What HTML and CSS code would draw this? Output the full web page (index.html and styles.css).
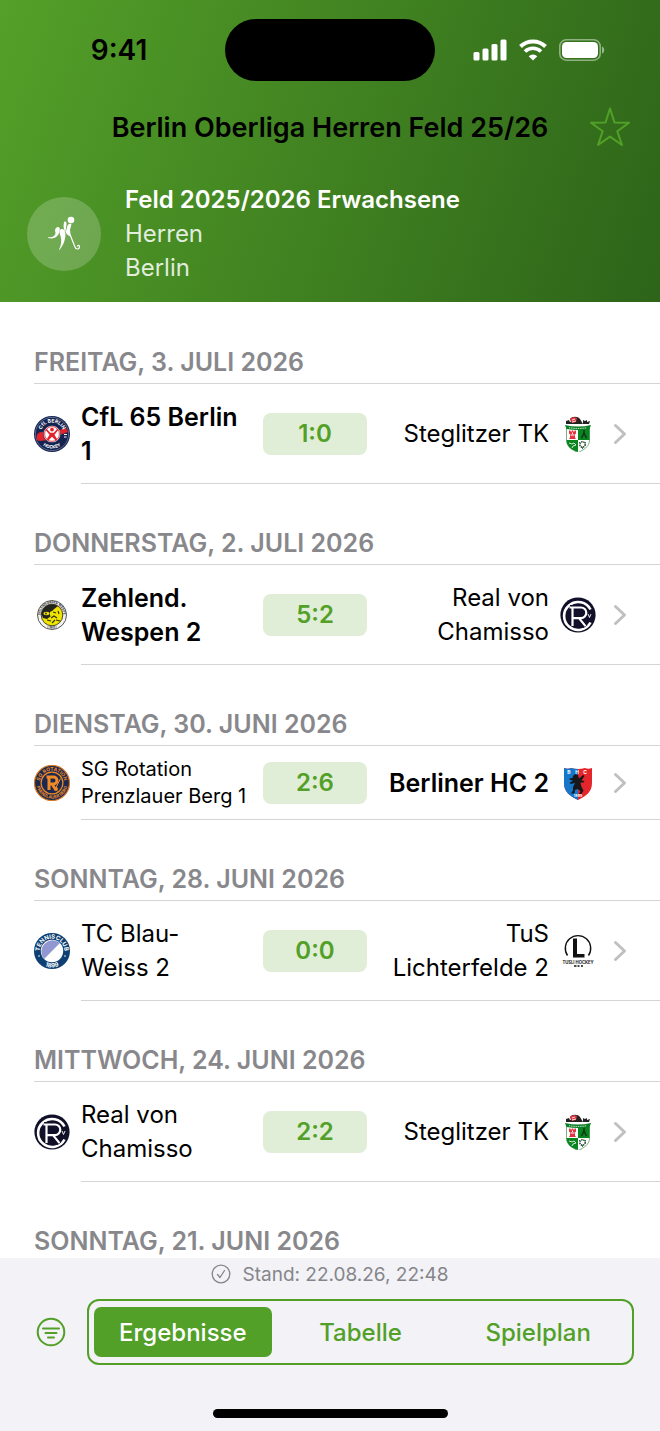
FILE: index.html
```html
<!DOCTYPE html>
<html lang="de">
<head>
  <meta charset="UTF-8" />
  <meta name="viewport" content="width=device-width, initial-scale=1">
  <title>Berlin Oberliga Herren Feld 25/26</title>
  <link rel="stylesheet" href="styles.css">
</head>
<body>

  <!-- shapes used more than once -->
  <svg class="defs" aria-hidden="true">
    <symbol id="crest-steglitz" viewBox="0 0 36 36">
      <path d="M6 5l3-1 1 2 3-1-1 3H6zM23 4l2 1 2-1v2l3-1-1 3h-6z" fill="#222"/>
      <path d="M10 3c2-3 8-3 10 0l3 5H12z" fill="#222"/>
      <path d="M10 3c2-2 5-2 7-1l-1 4-4 1z" fill="#e2343e"/>
      <path d="M12 4l3-1M12 6l4-1" stroke="#fff" stroke-width=".8"/>
      <path d="M6.500 12h23v12c0 7-6 10-11.500 12.500C12.500 34 6.500 31 6.500 24z" fill="#fff" stroke="#2c7a35" stroke-width=".6"/>
      <path d="M18 12h11.500v12H18z" fill="#08851f"/>
      <path d="M6.500 24H18v12C12 34 6.500 31 6.500 24z" fill="#08851f"/>
      <path d="M5 9q13 3 26 0l-1.500 4q-11.500 2-23 0z" fill="#0b7e25"/>
      <path d="M9 11.700q9 1.500 18 0" fill="none" stroke="#fff" stroke-width="1" stroke-dasharray="1 .8"/>
      <path d="M9 14.500h1.500v1h1.300v-1h1.400v1h1.300v-1H16v3l-1 1v3l1 1.500H9l1-1.500v-3l-1-1z" fill="#e2343e"/>
      <path d="M10.500 19h4M12.500 16.500v1.500" stroke="#fff" stroke-width="1"/>
      <path d="M24 14v3M24 17l-2.500 5M24 17l2.500 5" stroke="#14301a" stroke-width="1.500"/>
      <path d="M9 27l3 1 2-1 2 2-3 1-1 2" fill="none" stroke="#e8f4e9" stroke-width=".9"/>
      <circle cx="22.500" cy="28.500" r="2.700" fill="none" stroke="#1e3a23" stroke-width="1.400" stroke-dasharray="1.500 .7"/>
      <path d="M22.500 31v2M19 26l1 1M26 26l-1 1" stroke="#1e6e2c" stroke-width=".9"/>
    </symbol>

    <symbol id="crest-chamisso" viewBox="0 0 36 36">
      <circle cx="18" cy="18" r="17.600" fill="#101129"/>
      <path d="M30.500 12.500A14 14 0 1 0 30.500 25.500" fill="none" stroke="#fff" stroke-width="2.600"/>
      <path d="M10 10.500h11a5.500 5.500 0 0 1 0 11h-7M12.500 10.500V29M19 21.500l6.500 8" fill="none" stroke="#101129" stroke-width="5"/>
      <path d="M9.500 10.500h11.500a5.300 5.300 0 0 1 0 10.600h-8M12.500 10.500v18.500M19 21.100l6.500 8" fill="none" stroke="#fff" stroke-width="2.200"/>
      <path d="M28 17l1.500 3.500L31 17" fill="none" stroke="#fff" stroke-width=".9"/>
    </symbol>

    <symbol id="chevron" viewBox="0 0 14 22">
      <path d="M2.500 2.500L11.500 11l-9 8.500" fill="none" stroke="#c0c0c3" stroke-width="3" stroke-linecap="round" stroke-linejoin="round"/>
    </symbol>
  </svg>

  <div class="app">
    <header class="header">
      <div class="status-bar">
        <span class="time">9:41</span>
        <span class="island"></span>
        <span class="status-icons">
          <svg width="34" height="22" viewBox="0 0 34 22" fill="#fff">
            <rect x="0.500" y="13" width="6" height="8.500" rx="1.500"/>
            <rect x="9.500" y="9.500" width="6" height="12" rx="1.500"/>
            <rect x="18.500" y="5" width="6" height="16.500" rx="1.500"/>
            <rect x="27.500" y="0.500" width="6" height="21" rx="1.500"/>
          </svg>
          <svg width="28" height="22" viewBox="0 0 28 22" fill="none" stroke="#fff">
            <path d="M1.500 7.500a18 18 0 0 1 25 0" stroke-width="4"/>
            <path d="M6 12.500a11.500 11.500 0 0 1 16 0" stroke-width="3.600"/>
            <path d="M14 21.500l-4.300-4.300a6.200 6.200 0 0 1 8.600 0z" fill="#fff" stroke="none"/>
          </svg>
          <svg width="46" height="22" viewBox="0 0 46 22">
            <rect x="0.800" y="0.800" width="40.400" height="20.400" rx="6.500" fill="none" stroke="#fff" stroke-opacity=".45" stroke-width="1.600"/>
            <rect x="3" y="3" width="36" height="16" rx="4.500" fill="#fff"/>
            <path d="M43 7.500c3 1 3 6 0 7z" fill="#fff" fill-opacity=".5"/>
          </svg>
        </span>
      </div>

      <div class="nav-bar">
        <button class="icon-btn" aria-label="Zurück">
          <svg width="40" height="40" viewBox="0 0 40 40"><path d="M3 7L-9 20l12 13" fill="none" stroke="#4f9c27" stroke-width="3" stroke-linecap="round" stroke-linejoin="round" overflow="visible"/></svg>
        </button>
        <h1>Berlin Oberliga Herren Feld 25/26</h1>
        <button class="icon-btn" aria-label="Favorit">
          <svg width="40" height="40" viewBox="0 0 40 40"><path d="M20 1.500l4.500 14 14.500.2-11.700 8.600 4.700 13.700L20 29.600 8 38l4.700-13.700L1 15.700l14.500-.2z" fill="none" stroke="#52a028" stroke-width="2" stroke-linejoin="round"/></svg>
        </button>
      </div>

      <div class="league">
        <div class="league-icon">
          <svg width="34" height="36" viewBox="0 0 34 36" fill="#fff">
            <circle cx="24" cy="4" r="3.300"/>
            <path d="M17.500 5.500c2-.5 2.500 1.500 1.800 4l-.8 6.500c-2-2-2.500-8-1-10.500z"/>
            <path d="M20.500 9.500c1-2 3.800-2.500 3.900-.7l-1.400 5 .7 6.700c-2.500-.5-4.500-2.500-4.900-4.500z"/>
            <path d="M9.500 11.500c2-1.500 3.500 0 3.300 2-.2 6-4.800 10.500-11.800 8.500l.3-.8c4.500.5 7.200-1.700 7.200-4.700-.8-1.500-.5-4 1-5z"/>
            <path d="M13.500 13.500c2-1.500 5 .5 5 4.500 0 6-2.500 12.500-6.800 16.500 2.500-5 3.300-10 1.800-14.500-1-2-1.500-5 0-6.500z"/>
            <path d="M23 18.500l5 12.500c1 3 4.500 2.500 4.500-.5 0-1.500-2-1.500-2.300 0" fill="none" stroke="#fff" stroke-width="1.200"/>
          </svg>
        </div>
        <div class="league-text">
          <strong>Feld 2025/2026 Erwachsene</strong>
          <span>Herren</span>
          <span>Berlin</span>
        </div>
      </div>
    </header>

    <main class="results">
      <section>
        <h2>Freitag, 3. Juli 2026</h2>
        <a class="match" href="#">
          <svg class="crest" viewBox="0 0 36 36">
            <circle cx="18" cy="18" r="18" fill="#14234f"/>
            <circle cx="18" cy="18" r="16.600" fill="none" stroke="#8b96b5" stroke-width=".6"/>
            <path id="cfl-top" d="M6.500 18a11.500 11.500 0 0 1 23 0" fill="none"/>
            <path id="cfl-bottom" d="M3.500 18a14.500 14.500 0 0 0 29 0" fill="none"/>
            <path d="M3 19c1-3 5-4 9-2l13-3 7-2 2 4-8 3-12 5-8 1c-3 0-4-3-3-6z" fill="#e5232d"/>
            <circle cx="18" cy="18" r="8.600" fill="#fff" stroke="#14234f" stroke-width=".6"/>
            <circle cx="18" cy="18" r="7.400" fill="none" stroke="#e5232d" stroke-width=".8"/>
            <circle cx="18" cy="13.600" r="1.900" fill="#e5232d"/>
            <path d="M12.500 12.500l3.700 4.200h3.600l3.700-4.200 1 1.200-4 5 3 5-1.600 1-3.900-4-3.900 4-1.600-1 3-5-4-5z" fill="#e5232d"/>
            <text class="ring" font-size="5" fill="#fff"><textPath href="#cfl-top" startOffset="50%" text-anchor="middle">CfL BERLIN</textPath></text>
            <text class="ring" font-size="4.500" fill="#fff"><textPath href="#cfl-bottom" startOffset="50%" text-anchor="middle">HOCKEY</textPath></text>
            <path d="M30 18.500h3M30 21h2.500" stroke="#fff" stroke-width="1"/>
          </svg>
          <span class="team winner">CfL 65 Berlin 1</span>
          <span class="score">1:0</span>
          <span class="team away">Steglitzer TK</span>
          <svg class="crest"><use href="#crest-steglitz"/></svg>
          <svg class="chevron"><use href="#chevron"/></svg>
        </a>
      </section>

      <section>
        <h2>Donnerstag, 2. Juli 2026</h2>
        <a class="match" href="#">
          <svg class="crest" viewBox="0 0 36 36">
            <circle cx="18" cy="18" r="14.500" fill="#f2f2f2" stroke="#555" stroke-width="1"/>
            <path id="wespen-top" d="M6.500 18a11.500 11.500 0 0 1 23 0" fill="none"/>
            <path id="wespen-bottom" d="M4.300 18a13.700 13.700 0 0 0 27.400 0" fill="none"/>
            <circle cx="18" cy="18" r="10.800" fill="#efe500" stroke="#222" stroke-width=".8"/>
            <path d="M7.300 17A10.800 10.800 0 0 1 24 9l-5 4-2 6-4 3-4-1z" fill="#24241f"/>
            <ellipse cx="12.500" cy="16.500" rx="3" ry="1.700" fill="#efe500"/>
            <path d="M16 15l4-2 4 2 3-1-1 4-4 1-3-1-3 1z" fill="#efe500"/>
            <path d="M19 15l3 1M24 14l1 3M17 21l3-2 3 2M13 23l4 1M22 23l4 1M18 26l3-3" fill="none" stroke="#33320f" stroke-width="1.100"/>
            <circle cx="12" cy="16.500" r=".9" fill="#333"/>
            <text class="ring" font-size="3.200" fill="#222"><textPath href="#wespen-top" startOffset="50%" text-anchor="middle">ZEHLENDORFER WESPEN</textPath></text>
            <text class="ring" font-size="3.200" fill="#222"><textPath href="#wespen-bottom" startOffset="50%" text-anchor="middle">• 1911 •</textPath></text>
          </svg>
          <span class="team winner">Zehlend. Wespen 2</span>
          <span class="score">5:2</span>
          <span class="team away">Real von Chamisso</span>
          <svg class="crest"><use href="#crest-chamisso"/></svg>
          <svg class="chevron"><use href="#chevron"/></svg>
        </a>
      </section>

      <section>
        <h2>Dienstag, 30. Juni 2026</h2>
        <a class="match compact" href="#">
          <svg class="crest" viewBox="0 0 36 36">
            <circle cx="18" cy="18" r="17.500" fill="#1b2950" stroke="#d87920" stroke-width="1.200"/>
            <path id="rot-top" d="M5.800 18a12.200 12.200 0 0 1 24.400 0" fill="none"/>
            <path id="rot-bottom" d="M2.300 18a15.700 15.700 0 0 0 31.400 0" fill="none"/>
            <text class="ring" font-size="5" fill="#f08a24"><textPath href="#rot-top" startOffset="50%" text-anchor="middle">SG ROTATION</textPath></text>
            <text class="ring" font-size="4.400" fill="#f08a24"><textPath href="#rot-bottom" startOffset="50%" text-anchor="middle">PRENZLAUER BERG</textPath></text>
            <circle cx="18" cy="18" r="10.900" fill="#1b2950" stroke="#f08a24" stroke-width="1.200"/>
            <path d="M12.500 12h7a3.500 3.500 0 0 1 0 7h-4M15 12v13M18 19l4 6" fill="none" stroke="#f08a24" stroke-width="3"/>
            <path d="M26.500 13.500l-5 10" stroke="#f08a24" stroke-width="1"/>
            <circle cx="22" cy="24" r="2" fill="#f08a24"/>
          </svg>
          <span class="team long">SG Rotation Prenzlauer Berg 1</span>
          <span class="score">2:6</span>
          <span class="team away winner">Berliner HC 2</span>
          <svg class="crest" viewBox="0 0 36 36">
            <path d="M4 3q4 1.500 7 0 7 2 14 0 3 1.500 7 0v15c0 9-6 13-14 17C10 31 4 27 4 18z" fill="#e4262c"/>
            <path d="M4 3q4 1.500 7 0 3.500 1 7 1v31C10 31 4 27 4 18z" fill="#1676c9"/>
            <text class="ring" x="9 17 25" y="8.500" font-size="5" fill="#fff" text-anchor="middle">BHC</text>
            <path d="M13 11l2-2 3 1 1 3.500 4-3.500 1.500 1-3 4.500 3 .5-1 1.500h-3l.8 4 2.200 4-2 3.500h-2.500l1.500-3-3-2-2.500 1-.5 3.500h-3.500l2-3v-3.500l2-4-4 1-1.500-1 3.500-2.500-3-.7-.8-1.200 3.300-.5z" fill="#16181c"/>
            <text class="ring" x="18" y="31.500" font-size="3.500" fill="#fff" text-anchor="middle">1895</text>
          </svg>
          <svg class="chevron"><use href="#chevron"/></svg>
        </a>
      </section>

      <section>
        <h2>Sonntag, 28. Juni 2026</h2>
        <a class="match" href="#">
          <svg class="crest" viewBox="0 0 36 36">
            <circle cx="18" cy="18" r="18" fill="#0d3f73"/>
            <circle cx="18" cy="18" r="11.200" fill="#fff"/>
            <path d="M10.100 25.900A11.200 11.200 0 0 1 25.900 10.100z" fill="#9097d1"/>
            <path id="tc-top" d="M5.700 18a12.300 12.300 0 0 1 24.600 0" fill="none"/>
            <path id="tc-bottom" d="M1.500 18a16.500 16.500 0 0 0 33 0" fill="none"/>
            <text class="ring" font-size="6" fill="#fff"><textPath href="#tc-top" startOffset="50%" text-anchor="middle">TENNISCLUB</textPath></text>
            <text class="ring" font-size="6" fill="#fff"><textPath href="#tc-bottom" startOffset="50%" text-anchor="middle">1899</textPath></text>
            <circle cx="5" cy="23" r=".8" fill="#fff"/>
            <circle cx="31" cy="23" r=".8" fill="#fff"/>
          </svg>
          <span class="team">TC Blau-Weiss 2</span>
          <span class="score">0:0</span>
          <span class="team away">TuS Lichterfelde 2</span>
          <svg class="crest" viewBox="0 0 36 36">
            <path d="M7.500 22.500A12.700 12.700 0 1 1 28.500 22.500" fill="none" stroke="#111" stroke-width="1.400"/>
            <path d="M13 5.500h4v15.500h7.500v3.500H13z" fill="#111"/>
            <text class="ring" x="18" y="31" font-size="4.200" fill="#111" text-anchor="middle">TUSLI HOCKEY</text>
            <path d="M14 33h2.500M17.500 33h2M21 33h2" stroke="#111" stroke-width="1.300"/>
          </svg>
          <svg class="chevron"><use href="#chevron"/></svg>
        </a>
      </section>

      <section>
        <h2>Mittwoch, 24. Juni 2026</h2>
        <a class="match" href="#">
          <svg class="crest"><use href="#crest-chamisso"/></svg>
          <span class="team">Real von Chamisso</span>
          <span class="score">2:2</span>
          <span class="team away">Steglitzer TK</span>
          <svg class="crest"><use href="#crest-steglitz"/></svg>
          <svg class="chevron"><use href="#chevron"/></svg>
        </a>
      </section>

      <section>
        <h2>Sonntag, 21. Juni 2026</h2>
      </section>
    </main>

    <footer class="footer">
      <div class="updated">
        <svg width="20" height="20" viewBox="0 0 20 20" fill="none" stroke="#85858a" stroke-width="1.300" stroke-linecap="round" stroke-linejoin="round">
          <circle cx="10" cy="10" r="8.800"/>
          <path d="M6.500 10.500l2.500 3 4.500-7"/>
        </svg>
        <span>Stand: 22.08.26, 22:48</span>
      </div>
      <div class="toolbar">
        <button class="filter" aria-label="Filter">
          <svg width="30" height="30" viewBox="0 0 30 30" fill="none" stroke="#52a028" stroke-width="2" stroke-linecap="round">
            <circle cx="15" cy="15" r="13.300"/>
            <path d="M7 11.500h16M9.500 16h11M12 20.500h6"/>
          </svg>
        </button>
        <div class="segments">
          <button class="active">Ergebnisse</button>
          <button>Tabelle</button>
          <button>Spielplan</button>
        </div>
      </div>
      <div class="home-indicator"></div>
    </footer>
  </div>

</body>
</html>
```
FILE: styles.css
```css
* { box-sizing: border-box; }
body { margin: 0; font-family: Inter, "Liberation Sans", sans-serif; font-size: 24px; color: #000; background: #fff; }
button { font: inherit; border: none; background: none; padding: 0; cursor: pointer; }
svg { display: block; }
.defs { position: absolute; width: 0; height: 0; }
.ring { font-family: Inter, "Liberation Sans", sans-serif; font-weight: 700; }

.app { display: flex; flex-direction: column; height: 100vh; }

/* header */
.header {
  flex: none;
  padding-bottom: 17px;
  background: linear-gradient(110deg, #54a029 0%, #2d6419 100%);
}
.status-bar {
  display: grid;
  grid-template-columns: 1fr 210px 1fr;
  align-items: center;
  padding-top: 19px;
}
.time { font-size: 28px; font-weight: 600; text-align: center; padding-left: 13px; }
.island { height: 62px; border-radius: 31px; background: #000; }
.status-icons { display: flex; align-items: center; gap: 12px; padding-left: 38px; }

.nav-bar { display: flex; align-items: center; height: 92px; padding: 0 30px; }
.nav-bar h1 { flex: 1; margin: 0; font-size: 27px; font-weight: 600; text-align: center; white-space: nowrap; }
.icon-btn svg { overflow: visible; }

.league { display: flex; align-items: center; gap: 24px; padding: 10px 27px 0; }
.league-icon {
  display: flex;
  align-items: center;
  justify-content: center;
  width: 74px;
  height: 74px;
  border-radius: 50%;
  background: rgba(255,255,255,0.2);
}
.league-text { display: flex; flex-direction: column; line-height: 34px; color: rgba(255,255,255,0.85); }
.league-text strong { font-weight: 600; color: #fff; }

/* match list */
.results { flex: 1; min-height: 0; overflow: hidden; padding-top: 1px; }
.results h2 {
  margin: 0 0 0 34px;
  padding: 43px 0 5px;
  border-bottom: 1px solid #d4d4d6;
  font-size: 25px;
  line-height: 32px;
  font-weight: 600;
  color: #88888c;
  text-transform: uppercase;
}
.match {
  display: grid;
  grid-template-columns: 36px 1fr 104px 1fr 36px 20px;
  column-gap: 11px;
  align-items: center;
  height: 99px;
  padding: 0 33px 0 34px;
  color: #000;
  text-decoration: none;
}
.match.compact { height: 73px; }
section::after { content: ""; display: block; height: 1px; margin-left: 81px; background: #d4d4d6; }
.crest { width: 36px; height: 36px; }
.team { padding-right: 8px; line-height: 34px; }
.team.long { padding-right: 0; font-size: 20px; line-height: 27px; }
.team.away { padding-right: 0; text-align: right; }
.winner { font-size: 25px; font-weight: 600; }
.score {
  height: 42px;
  border-radius: 8px;
  background: #e0edd7;
  color: #52a028;
  font-weight: 600;
  line-height: 42px;
  text-align: center;
}
.chevron { width: 14px; height: 22px; justify-self: end; }

/* bottom bar */
.footer { flex: none; background: #f2f2f7; padding: 4px 26px 13px; }
.updated { display: flex; align-items: center; justify-content: center; gap: 11px; height: 24px; font-size: 19px; color: #85858a; }
.toolbar { display: flex; align-items: center; gap: 21px; margin-top: 13px; padding-left: 10px; }
.segments {
  flex: 1;
  display: flex;
  height: 66px;
  padding: 5px;
  border: 2px solid #52a028;
  border-radius: 12px;
}
.segments button { flex: 1; border-radius: 7px; color: #52a028; font-weight: 500; }
.segments .active { background: #52a028; color: #fff; margin: 1px 0; }
.home-indicator { width: 235px; height: 9px; margin: 44px auto 0; border-radius: 5px; background: #000; }
```
